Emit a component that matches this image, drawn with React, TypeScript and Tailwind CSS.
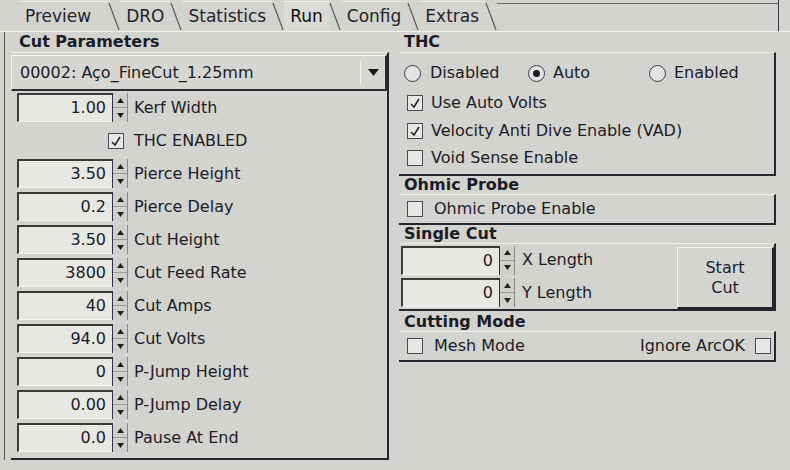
import React from "react"

const tabs = ["Preview", "DRO", "Statistics", "Run", "Config", "Extras"]

function Slash() {
  return (
    <svg width="12" height="30" viewBox="0 0 12 30" className="shrink-0">
      <line x1="1" y1="2" x2="11" y2="29" stroke="#5a5a5a" strokeWidth="1.2" />
    </svg>
  )
}

function SpinButtons() {
  return (
    <div className="w-[16px] h-full flex flex-col border-l border-l-[#33304a] border-r border-r-[#8a8a88] bg-[#cfcfcb]">
      <div className="flex-1 flex items-center justify-center border-b border-b-[#9a9a98]">
        <svg width="7" height="5" viewBox="0 0 7 5"><polygon points="3.5,0 7,5 0,5" fill="#222" /></svg>
      </div>
      <div className="flex-1 flex items-center justify-center">
        <svg width="7" height="5" viewBox="0 0 7 5"><polygon points="0,0 7,0 3.5,5" fill="#222" /></svg>
      </div>
    </div>
  )
}

function Spin({ value, width }: { value: string; width: string }) {
  return (
    <div className="flex h-[29px] items-stretch">
      <div className={`${width} bg-[#e7e7e4] border-t-2 border-l-2 border-t-[#3a3a3a] border-l-[#3a3a3a] border-b border-b-[#f4f4f2] flex items-center justify-end pr-[6px]`}>
        {value}
      </div>
      <SpinButtons />
    </div>
  )
}

function Check({ checked }: { checked?: boolean }) {
  return (
    <div className="w-[16px] h-[16px] border border-[#4a4a58] bg-[#e7e7e5] flex items-center justify-center shrink-0">
      {checked && (
        <svg width="12" height="12" viewBox="0 0 12 12">
          <polyline points="2,7 5,10 10,2" fill="none" stroke="#222" strokeWidth="1.5" />
        </svg>
      )}
    </div>
  )
}

function Radio({ on }: { on?: boolean }) {
  return (
    <div className="w-[17px] h-[17px] rounded-full border-[1.5px] border-[#3c3c48] bg-[#e4e4e6] flex items-center justify-center shrink-0">
      {on && <div className="w-[7px] h-[7px] rounded-full bg-[#1c1c22]" />}
    </div>
  )
}

const rows: { value: string; label: string }[] = [
  { value: "1.00", label: "Kerf Width" },
  { value: "", label: "THC ENABLED" },
  { value: "3.50", label: "Pierce Height" },
  { value: "0.2", label: "Pierce Delay" },
  { value: "3.50", label: "Cut Height" },
  { value: "3800", label: "Cut Feed Rate" },
  { value: "40", label: "Cut Amps" },
  { value: "94.0", label: "Cut Volts" },
  { value: "0", label: "P-Jump Height" },
  { value: "0.00", label: "P-Jump Delay" },
  { value: "0.0", label: "Pause At End" },
]

export default function App() {
  return (
    <div
      className="w-[790px] h-[470px] overflow-hidden bg-[#d3d3cf] text-[#1c1c26] text-[16px] leading-none"
      style={{ fontFamily: '"DejaVu Sans", Verdana, sans-serif' }}
    >
      {/* Tabs */}
      <div className="h-[32px] flex items-end pl-[19px] border-b border-b-[#f2f2ef] text-[17px]">
        {tabs.map((t) => (
          <div key={t} className="flex items-end h-[30px]">
            <div
              className={`h-full flex items-center pl-[6px] border-t border-t-[#efefec] ${
                t === "Preview" ? "pr-[17px]" : "pr-[6px]"
              } ${t === "Run" ? "bg-[#dadad6] text-[#111]" : "text-[#23232c]"}`}
            >
              {t}
            </div>
            <Slash />
          </div>
        ))}
        <div className="flex-1 self-start h-[4px] border-b border-b-[#6a6a6a]" />
        <div className="w-[1px] h-full bg-[#3a3a44] mr-[11px]" />
      </div>

      <div className="flex pl-[6px] pr-[14px] border-l border-l-[#555] ml-[4px]">
        {/* Left column */}
        <div className="w-[378px] flex flex-col">
          <div className="font-bold h-[20px] flex items-end pl-[8px] pb-[2px]">Cut Parameters</div>
          <div className="border-t border-t-[#f0f0ed] border-r-2 border-r-[#26262e] border-b-2 border-b-[#26262e] pb-[4px]">
            <div className="h-[36px] mt-[2px] flex items-center pl-[8px] border border-[#f4f4f1] border-r-2 border-r-[#2a2a30] border-b-2 border-b-[#2a2a30] bg-[#d6d6d2]">
              <span className="flex-1">00002: Aço_FineCut_1.25mm</span>
              <div className="w-[1px] h-[24px] bg-[#8d8d8a] border-r border-r-[#f2f2f0]" />
              <div className="w-[24px] flex justify-center">
                <svg width="11" height="7" viewBox="0 0 11 7"><polygon points="0,0 11,0 5.5,7" fill="#1a1a1a" /></svg>
              </div>
            </div>
            <div className="flex flex-col">
              {rows.map((r) => (
                <div key={r.label} className="h-[33px] flex items-center pl-[6px]">
                  {r.label === "THC ENABLED" ? (
                    <div className="w-[111px] flex justify-end pr-[4px]">
                      <Check checked />
                    </div>
                  ) : (
                    <Spin value={r.value} width="w-[95px]" />
                  )}
                  <span className="ml-[6px]">{r.label}</span>
                </div>
              ))}
            </div>
          </div>
        </div>

        {/* Right column */}
        <div className="flex-1 ml-[10px] flex flex-col">
          <div className="font-bold h-[20px] flex items-end pl-[5px] pb-[2px]">THC</div>
          <div className="border-t border-t-[#f0f0ed] border-r-2 border-r-[#26262e] border-b-2 border-b-[#26262e] h-[124px] pt-[7px] pl-[5px] flex flex-col">
            <div className="h-[26px] flex items-center">
              <div className="w-[124px] flex items-center gap-[9px]"><Radio /><span>Disabled</span></div>
              <div className="w-[121px] flex items-center gap-[8px]"><Radio on /><span>Auto</span></div>
              <div className="flex items-center gap-[8px]"><Radio /><span>Enabled</span></div>
            </div>
            <div className="h-[27px] flex items-end pb-[2px] pl-[3px] gap-[8px]"><Check checked /><span>Use Auto Volts</span></div>
            <div className="h-[28px] flex items-end pb-[2px] pl-[3px] gap-[8px]"><Check checked /><span>Velocity Anti Dive Enable (VAD)</span></div>
            <div className="h-[27px] flex items-end pb-[2px] pl-[3px] gap-[8px]"><Check /><span>Void Sense Enable</span></div>
          </div>

          <div className="font-bold h-[18px] flex items-end pl-[5px] pb-[1px]">Ohmic Probe</div>
          <div className="border-t border-t-[#f0f0ed] border-r-2 border-r-[#26262e] border-b-2 border-b-[#26262e] h-[31px] flex items-center pl-[8px] gap-[11px]">
            <Check /><span>Ohmic Probe Enable</span>
          </div>

          <div className="font-bold h-[18px] flex items-end pl-[5px] pb-[1px]">Single Cut</div>
          <div className="border-t border-t-[#f0f0ed] border-r-2 border-r-[#26262e] border-b-2 border-b-[#26262e] h-[68px] flex">
            <div className="flex flex-col pl-[2px]">
              <div className="h-[33px] flex items-center">
                <Spin value="0" width="w-[98px]" />
                <span className="ml-[7px]">X Length</span>
              </div>
              <div className="h-[33px] flex items-center">
                <Spin value="0" width="w-[98px]" />
                <span className="ml-[7px]">Y Length</span>
              </div>
            </div>
            <div className="flex-1" />
            <div className="w-[97px] h-[62px] mt-[3px] border border-[#f4f4f1] border-r-2 border-r-[#22222a] border-b-2 border-b-[#22222a] bg-[#d4d4d0] flex flex-col items-center justify-center leading-[20px] text-[#1d1d36]">
              <span>Start</span>
              <span>Cut</span>
            </div>
          </div>

          <div className="font-bold h-[20px] flex items-end pl-[5px] pb-[1px]">Cutting Mode</div>
          <div className="border-t border-t-[#f0f0ed] border-r-2 border-r-[#26262e] border-b-2 border-b-[#26262e] h-[31px] flex items-center pl-[8px] pr-[3px]">
            <Check />
            <span className="ml-[11px] flex-1">Mesh Mode</span>
            <span className="mr-[10px]">Ignore ArcOK</span>
            <Check />
          </div>
        </div>
      </div>
    </div>
  )
}
